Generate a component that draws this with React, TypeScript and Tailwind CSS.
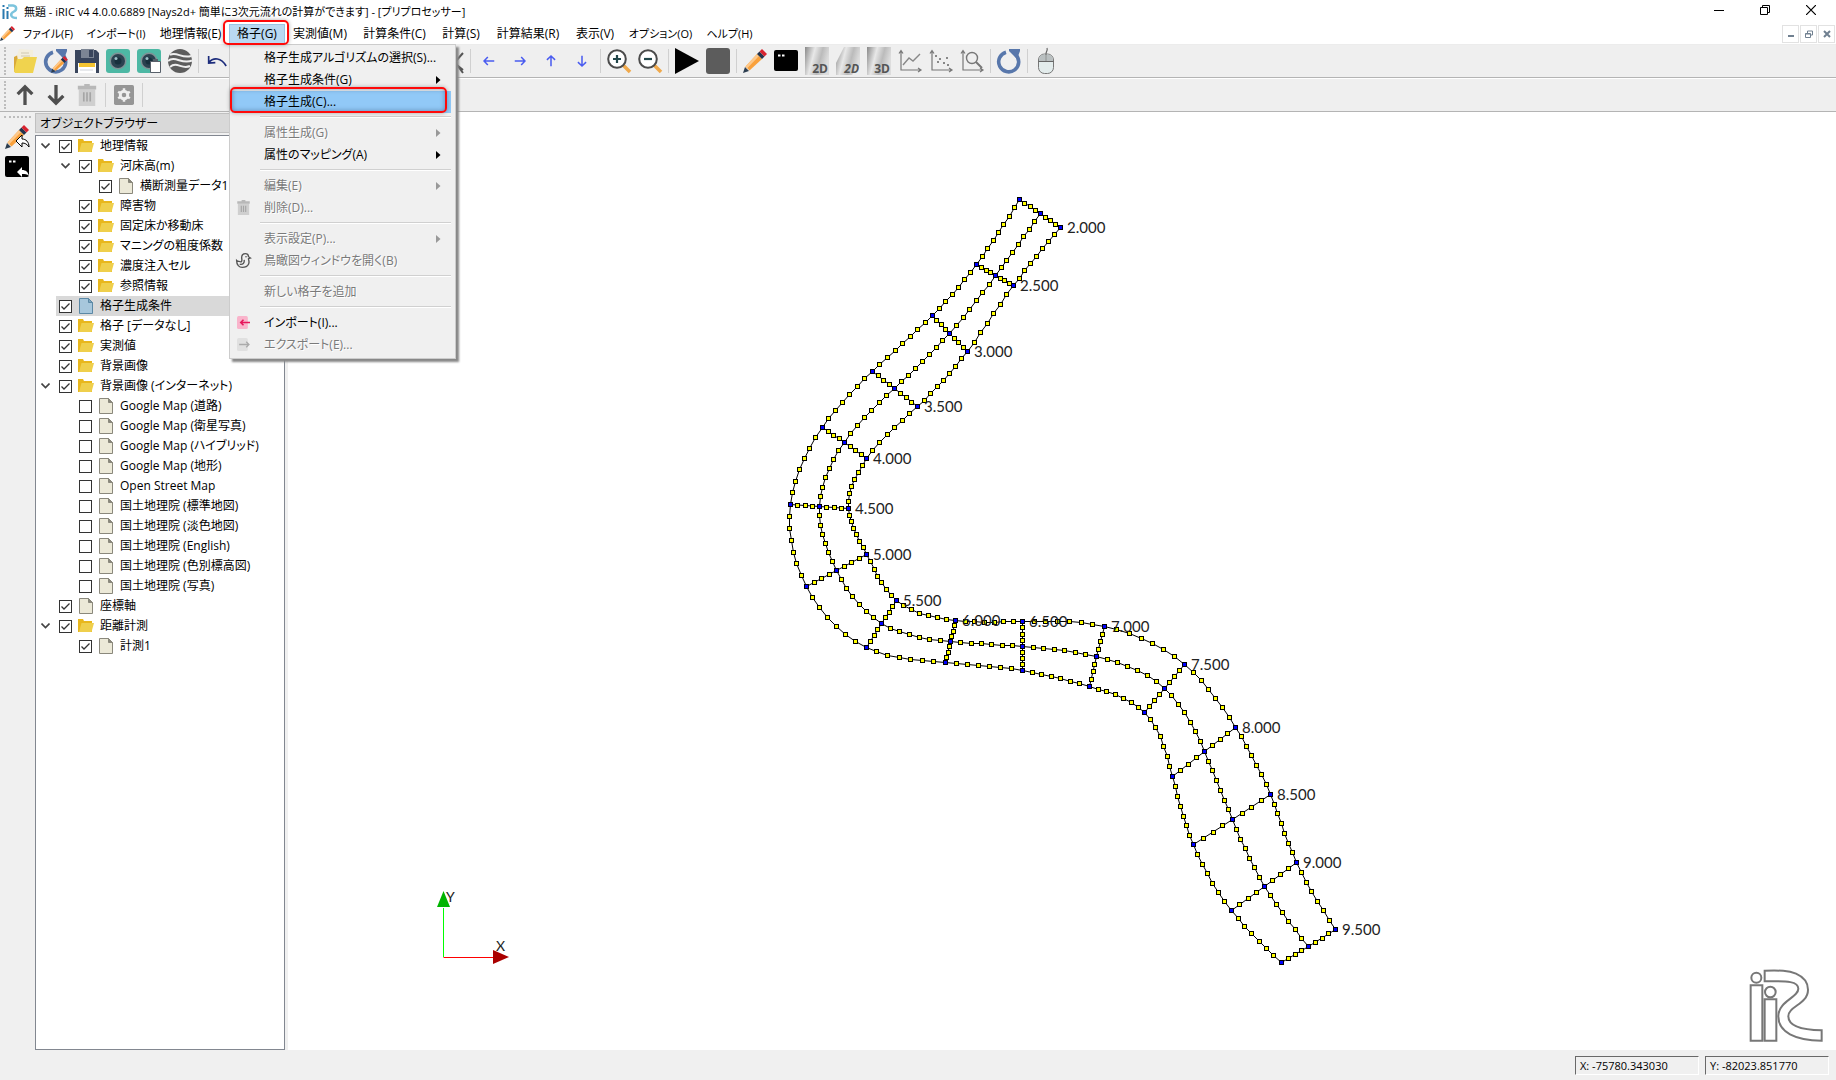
import React, { useState } from "react";

type Point = [number, number];

/* ---------- cross sections of the river: left bank, centre, right bank ---------- */

const SECTIONS: { name: string; pts: [Point, Point, Point] }[] = [
  { name: "2.000", pts: [[1019, 199], [1040, 213], [1060, 227]] },
  { name: "2.500", pts: [[976, 264], [995, 275], [1013, 285]] },
  { name: "3.000", pts: [[932, 315], [949, 333], [967, 351]] },
  { name: "3.500", pts: [[872, 371], [894, 388], [917, 406]] },
  { name: "4.000", pts: [[822, 427], [844, 442], [866, 458]] },
  { name: "4.500", pts: [[790, 504], [819, 506], [848, 508]] },
  { name: "5.000", pts: [[806, 586], [836, 570], [866, 554]] },
  { name: "5.500", pts: [[866, 647], [881, 623], [896, 600]] },
  { name: "6.000", pts: [[945, 662], [950, 641], [955, 620]] },
  { name: "6.500", pts: [[1022, 670], [1022, 646], [1022, 621]] },
  { name: "7.000", pts: [[1089, 686], [1096, 656], [1104, 626]] },
  { name: "7.500", pts: [[1144, 712], [1164, 688], [1184, 664]] },
  { name: "8.000", pts: [[1172, 776], [1204, 751], [1235, 727]] },
  { name: "8.500", pts: [[1193, 844], [1232, 819], [1270, 794]] },
  { name: "9.000", pts: [[1231, 910], [1264, 886], [1296, 862]] },
  { name: "9.500", pts: [[1281, 962], [1308, 946], [1335, 929]] },
];

const DIVISIONS = SECTIONS.slice(1).map((_, i) => (i === 0 || i === 2 ? 8 : 7));

/* Second derivatives of a natural cubic spline through (t, v). */
function secondDerivatives(t: number[], v: number[]): number[] {
  const n = t.length;
  const m = new Array(n).fill(0);
  const u = new Array(n).fill(0);
  for (let i = 1; i < n - 1; i++) {
    const sig = (t[i] - t[i - 1]) / (t[i + 1] - t[i - 1]);
    const p = sig * m[i - 1] + 2;
    m[i] = (sig - 1) / p;
    const d = (v[i + 1] - v[i]) / (t[i + 1] - t[i]) - (v[i] - v[i - 1]) / (t[i] - t[i - 1]);
    u[i] = ((6 * d) / (t[i + 1] - t[i - 1]) - sig * u[i - 1]) / p;
  }
  m[n - 1] = 0;
  for (let i = n - 2; i >= 0; i--) m[i] = m[i] * m[i + 1] + u[i];
  return m;
}

function splinePoints(pts: Point[]): Point[] {
  const t = [0];
  for (let i = 1; i < pts.length; i++) {
    t.push(t[i - 1] + Math.hypot(pts[i][0] - pts[i - 1][0], pts[i][1] - pts[i - 1][1]));
  }
  const axes = [0, 1].map((k) => {
    const v = pts.map((p) => p[k]);
    return { v, m: secondDerivatives(t, v) };
  });
  const out: Point[] = [];
  for (let i = 0; i < pts.length - 1; i++) {
    const h = t[i + 1] - t[i];
    for (let j = 1; j < DIVISIONS[i]; j++) {
      const b = j / DIVISIONS[i];
      const a = 1 - b;
      const [x, y] = axes.map(
        ({ v, m }) => a * v[i] + b * v[i + 1] + (((a * a * a - a) * m[i] + (b * b * b - b) * m[i + 1]) * h * h) / 6,
      );
      out.push([Math.round(x), Math.round(y)]);
    }
    if (i < pts.length - 2) out.push(pts[i + 1]);
  }
  return [pts[0], ...out, pts[pts.length - 1]];
}

const LINES = [0, 1, 2].map((k) => splinePoints(SECTIONS.map((s) => s.pts[k])));

const CROSS_POINTS: Point[] = SECTIONS.flatMap(({ pts }) =>
  [0, 1].flatMap((k) =>
    [1, 2, 3].map(
      (j): Point => [
        Math.round(pts[k][0] + ((pts[k + 1][0] - pts[k][0]) * j) / 4),
        Math.round(pts[k][1] + ((pts[k + 1][1] - pts[k][1]) * j) / 4),
      ],
    ),
  ),
);

const toPoints = (pts: Point[]) => pts.map(([x, y]) => `${x + 0.5},${y + 0.5}`).join(" ");

function Marker({ p, fill }: { p: Point; fill: string }) {
  return <rect x={p[0] - 1.5} y={p[1] - 1.5} width={4} height={4} fill={fill} stroke="#000" strokeWidth={1} />;
}

function GridDrawing() {
  return (
    <svg className="absolute inset-0 h-full w-full" aria-label="格子生成条件">
      <g transform="translate(-288 -112)">
        <g fill="none" stroke="#000" strokeWidth={1}>
          {LINES.map((l, i) => (
            <polyline key={i} points={toPoints(l)} />
          ))}
          {SECTIONS.map((s) => (
            <polyline key={s.name} points={toPoints(s.pts)} />
          ))}
        </g>
        {LINES.flat().map((p, i) => (
          <Marker key={i} p={p} fill="#ffff00" />
        ))}
        {CROSS_POINTS.map((p, i) => (
          <Marker key={i} p={p} fill="#ffff00" />
        ))}
        {SECTIONS.flatMap((s) => s.pts).map((p, i) => (
          <Marker key={i} p={p} fill="#0000ff" />
        ))}
        <g className="font-['Lato'] text-[15px]" fill="#222">
          {SECTIONS.map((s) => (
            <text key={s.name} x={s.pts[2][0] + 7} y={s.pts[2][1] + 6}>
              {s.name}
            </text>
          ))}
        </g>
      </g>
    </svg>
  );
}

function AxisDrawing() {
  return (
    <svg className="absolute bottom-[80px] left-[145px]" width="80" height="88" viewBox="433 881 80 88">
      <path d="M443.500 907V956" stroke="#00ff00" />
      <path d="M443.500 956.500H494" stroke="#ff0000" />
      <path d="M443.500 890L450 906H437Z" fill="#00b400" />
      <path d="M509 956L493 949V963Z" fill="#aa0000" />
      <g className="font-['Lato'] text-[14px]" fill="#222">
        <text x="446" y="901">Y</text>
        <text x="496" y="950">X</text>
      </g>
    </svg>
  );
}

function IricLogo() {
  return (
    <svg className="absolute right-3 bottom-[7px]" width="76" height="76" viewBox="624 78 228 228" fill="none" stroke="#777" strokeWidth="6">
      <path d="M632 133H667V299H632ZM674 175H709V299H674Z" />
      <circle cx="649" cy="110" r="15" />
      <circle cx="691" cy="153" r="16" />
      <path d="M674 89C720 88 745 88 768 98C793 109 804 124 804 146C804 190 745 195 745 226C745 252 780 267 845 268V299C765 298 715 274 715 226C715 180 775 170 775 143C775 122 745 119 674 121Z" />
    </svg>
  );
}

/* ---------- icons ---------- */

function Icon({ size = 24, children }: { size?: number; children: React.ReactNode }) {
  return (
    <svg className="overflow-visible" width={size} height={size} viewBox="0 0 24 24" fill="none">
      {children}
    </svg>
  );
}

const FolderDocs = () => (
  <Icon>
    <path d="M1 8L5 6V21L1 23Z" fill="#d9a93a" />
    <path d="M4 6L6 0L20 1V12H5Z" fill="#f3eedd" />
    <path d="M8 4H16M8 7H17" stroke="#cfc8b0" />
    <path d="M1 22L4 10H9L11 8H24L20 24H2Z" fill="#f0d34e" />
  </Icon>
);

const Pencil = () => (
  <>
    <path d="M0 24L2 18L6 22Z" fill="#2d3e50" />
    <path d="M2.500 17.500L14 5L19 10L6.500 21.500Z" fill="#f9a13c" />
    <path d="M2.500 17.500L14 5L16 7L4 19.500Z" fill="#fdc88a" />
    <path d="M14 5L16.500 2.500L21.500 7.500L19 10Z" fill="#24344d" />
    <path d="M16.500 2.500L19 0L24 5L21.500 7.500Z" fill="#d8232f" />
  </>
);

const Reload = ({ color = "#5877ab" }: { color?: string }) => (
  <>
    <path d="M9 3.200A10 10 0 1 0 18.500 5.500" stroke={color} strokeWidth="3.600" />
    <path d="M12 0H23V2L20 10L12 2Z" fill={color} />
  </>
);

const ReloadPencil = () => (
  <Icon>
    <Reload />
    <g transform="translate(7 7) scale(.7)">
      <Pencil />
    </g>
  </Icon>
);

const Floppy = () => (
  <Icon>
    <path d="M0 1H21L24 4V24H0Z" fill="#39455c" />
    <path d="M6 0H19V9H6Z" fill="#7c8594" />
    <path d="M14 1H18V8H14Z" fill="#39455c" />
    <path d="M3 14H21V24H3Z" fill="#fff" />
    <path d="M4 14H20V18H4Z" fill="#f5c430" />
    <path d="M5 21H18" stroke="#d0d4da" />
  </Icon>
);

const Snapshot = ({ clip = false }: { clip?: boolean }) => (
  <Icon>
    <rect width="24" height="24" rx="3" fill="#4db8a4" />
    <circle cx="12" cy="12" r="8.500" fill="#7f9296" />
    <circle cx="12" cy="12" r="7" fill="#2b4250" />
    <circle cx="12" cy="12" r="3.500" fill="#18303d" />
    <circle cx="10" cy="9.500" r="1.500" fill="#9fc0c8" />
    {clip && (
      <>
        <path d="M13.500 12.500H23.500V23.500H13.500Z" fill="#fff" stroke="#58606a" />
        <path d="M16 10H21V13H16Z" fill="#58606a" />
      </>
    )}
  </Icon>
);

const Swirl = () => (
  <Icon>
    <circle cx="12" cy="12" r="12" fill="#5d5d5d" />
    <path d="M2 6C8 2 14 10 23 7M0 12C7 6 14 16 24 11.500M2 18C9 12 14 21 22 17" stroke="#efefef" strokeWidth="2" />
  </Icon>
);

const Undo = () => (
  <Icon size={20}>
    <path d="M2 14C8 7 17 8 23 18M2 6V14.500L10 14" stroke="#1c2c7c" strokeWidth="2" />
  </Icon>
);

const Cross = () => (
  <Icon>
    <path d="M1 3L23 21M23 4L15 13L23 24" stroke="#555" strokeWidth="2" />
  </Icon>
);

const Arrow = ({ turn }: { turn: number }) => (
  <Icon size={14}>
    <path transform={`rotate(${turn} 12 12)`} d="M4 12H21M10 5L3.500 12L10 19" stroke="#4a5cf0" strokeWidth="2.600" />
  </Icon>
);

const Magnifier = ({ plus = false }: { plus?: boolean }) => (
  <Icon>
    <path d="M16 16L23 23" stroke="#f0a94c" strokeWidth="3.600" />
    <circle cx="10" cy="10" r="8.800" fill="#fff" stroke="#4b4b4b" strokeWidth="2" />
    <path d={plus ? "M6 10H14M10 6V14" : "M6 10H14"} stroke="#23474b" strokeWidth="2.200" />
  </Icon>
);

const Play = () => (
  <Icon>
    <path d="M0 -1L24 12L0 25Z" fill="#000" />
  </Icon>
);
const Stop = () => (
  <Icon>
    <rect y="-1" width="24" height="26" rx="3" fill="#5c5c5c" />
  </Icon>
);
const Console = () => (
  <>
    <rect y="1" width="24" height="21" rx="2" fill="#000" />
    <path d="M4 6.500H6.500M8 6.500H10.500" stroke="#fff" strokeWidth="2" />
  </>
);

const Shade = ({ text, cut = false }: { text: string; cut?: boolean }) => (
  <Icon>
    <defs>
      <linearGradient id="shade" x1="0" y1="0" x2="1" y2="0.300">
        <stop offset="0" stopColor="#888" />
        <stop offset="0.400" stopColor="#e8e8e8" />
        <stop offset="0.700" stopColor="#bbb" />
        <stop offset="1" stopColor="#ddd" />
      </linearGradient>
    </defs>
    <path d={cut ? "M8 -2H24V16L16 26H0V14Z" : "M0 -2H24V26H0Z"} fill="url(#shade)" />
    <text x="23" y="24" textAnchor="end" fill="#555" className={cut ? "font-['Open_Sans'] text-[12px] font-bold italic" : "font-['Open_Sans'] text-[12px] font-bold"}>
      {text}
    </text>
  </Icon>
);

const Chart = ({ kind }: { kind: "line" | "dots" | "lens" }) => (
  <Icon>
    <path d="M3 2V21H22M1 4.500L3 1.500L5 4.500M20 19L23 21L20 23" stroke="#777" strokeWidth="1.200" />
    {kind === "line" && <path d="M5 16L11 9L15 12L22 5" stroke="#888" strokeWidth="1.400" />}
    {kind === "dots" && (
      <path d="M6 7H8M10 10H12M8 13H10M14 14H16M17 9H19M18 16H20" stroke="#888" strokeWidth="2" />
    )}
    {kind === "lens" && (
      <>
        <circle cx="12" cy="9" r="5.500" stroke="#777" strokeWidth="1.400" />
        <path d="M16 13L22 19" stroke="#777" strokeWidth="2" />
      </>
    )}
  </Icon>
);

const Mouse = () => (
  <Icon>
    <path d="M12 5C12 2 14 2 13 -1" stroke="#666" strokeWidth="1.200" />
    <rect x="4.500" y="5" width="15" height="19.500" rx="6" fill="#e3ecec" stroke="#777" />
    <path d="M5 12C5 8 7 5.500 11 5.500V12H5ZM13 5.500C17 5.500 19 8 19 12H13Z" fill="#b9bfc0" />
    <path d="M4.500 12.500H19.500M12 5V12" stroke="#666" />
  </Icon>
);

const BoldArrow = ({ down = false }: { down?: boolean }) => (
  <Icon size={22}>
    <path transform={down ? "rotate(180 12 12)" : undefined} d="M12 23V3M4 11L12 3L20 11" stroke="#4f4f4f" strokeWidth="3.600" />
  </Icon>
);

const TrashShape = () => (
  <>
    <path d="M3 6H21V24H3Z" fill="#cfcfcf" />
    <path d="M2 2H22V6H2ZM9 0H15V2H9Z" fill="#b8b8b8" />
    <path d="M8.500 9V19M12 9V19M15.500 9V19" stroke="#a5a5a5" strokeWidth="1.800" />
  </>
);

const Gear = () => (
  <Icon size={20}>
    <rect width="24" height="24" rx="2" fill="#969696" />
    <circle cx="12" cy="12" r="4.500" stroke="#efefef" strokeWidth="3.500" />
    <path d="M12 4V7M12 17V20M5 8L8 10M16 14L19 16M5 16L8 14M16 10L19 8" stroke="#efefef" strokeWidth="3" />
  </Icon>
);

const BackArrow = () => (
  <path d="M11 16L17 10V14C21 14 24 17 24 22C22 19 20 18 17 18V22Z" fill="#fff" stroke="#000" strokeWidth="1" />
);

const Bird = () => (
  <Icon size={15}>
    <path d="M1 12C3 14 5 13 7 14C9 15 10 12 9 8C9 3 11 1 15 1C19 1 20 4 20 6L23 8L20 9C20 12 22 14 20 18C18 22 14 23 10 23C5 23 1 19 1 12ZM6 18C11 19 14 16 13 11" stroke="#555" strokeWidth="2.200" />
    <circle cx="16" cy="6" r="1.300" fill="#555" />
  </Icon>
);

const FolderIcon = () => (
  <svg width="16" height="14" viewBox="0 0 16 14">
    <path d="M0 0H5L6 2H14V13H0Z" fill="#e8b71d" />
    <path d="M1 13L3.500 4H16L13.500 13Z" fill="#efcf4c" />
  </svg>
);

const FileIcon = ({ blue = false }: { blue?: boolean }) => (
  <svg width="16" height="16" viewBox="0 0 16 16">
    <path d="M1.500 .5H10.500L14.500 4.500V15.500H1.500Z" fill={blue ? "#a7c7dc" : "#ece9d8"} stroke={blue ? "#5b88a5" : "#8a887c"} />
    <path d="M10.500 .5V4.500H14.500Z" fill={blue ? "#7ea5be" : "#8a887c"} stroke={blue ? "#5b88a5" : "#8a887c"} />
  </svg>
);

/* ---------- title, menus ---------- */

const MDI_BUTTON = "grid h-[18px] w-[17px] place-items-center border border-[#e2e2e2] bg-white text-[#708090]";

function TitleBar() {
  return (
    <header className="flex h-[23px] items-start bg-white">
      <svg className="mt-1 ml-[2px] shrink-0" width="16" height="16" viewBox="0 0 16 16" fill="none">
        <path d="M1.500 5V15M5.500 7V15M1.500 1V3M5.500 3V5" stroke="#2a7ab0" strokeWidth="2" />
        <path d="M6 1.500H11C15 2 15 6 12 7.500C7 10 9 14 15 14" stroke="#7cc4dd" strokeWidth="2.500" />
      </svg>
      <h1 className="ml-[6px] grow truncate pt-[4px] text-[11px]">無題 - iRIC v4 4.0.0.6889 [Nays2d+ 簡単に3次元流れの計算ができます] - [プリプロセッサー]</h1>
      <div className="mr-[2px] flex">
        <button aria-label="最小化" className="grid h-5 w-[46px] place-items-center">
          <svg width="10" height="10" viewBox="0 0 10 10"><path d="M0 5.500H10" stroke="#000" /></svg>
        </button>
        <button aria-label="元に戻す" className="grid h-5 w-[46px] place-items-center">
          <svg width="10" height="10" viewBox="0 0 10 10" fill="none"><path d="M.5 2.500H7.500V9.500H.5ZM2.500 2.500V.5H9.500V7.500H7.500" stroke="#000" /></svg>
        </button>
        <button aria-label="閉じる" className="grid h-5 w-[46px] place-items-center">
          <svg width="10" height="10" viewBox="0 0 10 10"><path d="M0 0L10 10M10 0L0 10" stroke="#000" strokeWidth="1.200" /></svg>
        </button>
      </div>
    </header>
  );
}

type MenuEntry = { label: string; sub?: boolean; off?: boolean; active?: boolean; icon?: React.ReactNode } | null;

const GRID_MENU: MenuEntry[] = [
  { label: "格子生成アルゴリズムの選択(S)..." },
  { label: "格子生成条件(G)", sub: true },
  { label: "格子生成(C)...", active: true },
  null,
  { label: "属性生成(G)", sub: true, off: true },
  { label: "属性のマッピング(A)", sub: true },
  null,
  { label: "編集(E)", sub: true, off: true },
  { label: "削除(D)...", off: true, icon: <Icon size={15}><TrashShape /></Icon> },
  null,
  { label: "表示設定(P)...", sub: true, off: true },
  { label: "鳥瞰図ウィンドウを開く(B)", off: true, icon: <Bird /> },
  null,
  { label: "新しい格子を追加", off: true },
  null,
  {
    label: "インポート(I)...",
    icon: (
      <Icon size={13}>
        <rect width="20" height="24" rx="3" fill="#f9b4cb" />
        <path d="M24 12H8M12 7L7 12L12 17" stroke="#e5175c" strokeWidth="3" />
      </Icon>
    ),
  },
  {
    label: "エクスポート(E)...",
    off: true,
    icon: (
      <Icon size={13}>
        <rect width="20" height="24" rx="3" fill="#e0e0e0" />
        <path d="M4 12H21M17 7L22 12L17 17" stroke="#aaa" strokeWidth="2.500" />
      </Icon>
    ),
  },
];

function GridMenu() {
  return (
    <ul role="menu" className="absolute top-[20px] left-0 z-20 w-[227px] border border-[#ccc] bg-[#f0f0f0] py-[2px] pr-[4px] pl-[2px] shadow-[3px_3px_2px_#888]">
      {GRID_MENU.map((m, i) =>
        m === null ? (
          <li key={i} role="separator" className="ml-[28px] flex h-[9px] items-center">
            <span className="h-[2px] w-full border-t border-b border-t-[#d0d0d0] border-b-white" />
          </li>
        ) : (
          <li key={i} role="none" className="relative">
            <button
              role="menuitem"
              disabled={m.off}
              className={
                "flex h-[22px] w-full items-center text-left whitespace-nowrap disabled:text-[#7a7a7a] disabled:[text-shadow:1px_1px_0_#fff] " +
                (m.active ? "bg-[#91c9f7]" : "")
              }
            >
              <span className="grid w-[32px] place-items-center pr-[10px]">{m.icon}</span>
              <span className="grow">{m.label}</span>
              {m.sub && (
                <svg className="mr-[10px]" width="5" height="8" viewBox="0 0 5 8">
                  <path d="M0 0L4.500 4L0 8Z" fill={m.off ? "#999" : "#000"} />
                </svg>
              )}
            </button>
            {m.active && (
              <span className="pointer-events-none absolute -top-[4px] -left-[2px] h-[26px] w-[217px] rounded-[5px] border-2 border-[#ff0a0a] shadow-[inset_0_0_5px_rgba(60,90,130,.6),0_0_4px_rgba(0,0,0,.3)]" />
            )}
          </li>
        ),
      )}
    </ul>
  );
}

/* Labels made of katakana are set one step smaller than those made of kanji. */
const MENUS: { label: string; className: string }[] = [
  { label: "ファイル(F)", className: "w-16 text-[11px]" },
  { label: "インポート(I)", className: "w-[72px] text-[11px]" },
  { label: "地理情報(E)", className: "w-[77px] text-[12px]" },
  { label: "格子(G)", className: "" },
  { label: "実測値(M)", className: "w-[70px] text-[12px]" },
  { label: "計算条件(C)", className: "w-[79px] text-[12px]" },
  { label: "計算(S)", className: "w-[54px] text-[12px]" },
  { label: "計算結果(R)", className: "w-20 text-[12px]" },
  { label: "表示(V)", className: "w-[54px] text-[12px]" },
  { label: "オプション(O)", className: "w-[77px] text-[11px]" },
  { label: "ヘルプ(H)", className: "w-[61px] text-[11px]" },
];

function MenuBar() {
  return (
    <nav className="flex h-[21px] items-center bg-white">
      <span className="w-4">
        <Icon size={15}><Pencil /></Icon>
      </span>
      {MENUS.map(({ label, className }) =>
        label === "格子(G)" ? (
          <div key={label} className="relative z-20">
            <button aria-expanded="true" className="h-[20px] w-[56px] border border-[#9cc4e4] bg-[#b9d9f2] whitespace-nowrap">{label}</button>
            <span className="pointer-events-none absolute -top-[4px] -right-[4px] -left-[6px] z-30 h-[25px] rounded-[5px] border-2 border-[#ff0a0a] shadow-[0_0_4px_rgba(0,0,0,.3)]" />
            <GridMenu />
          </div>
        ) : (
          <button key={label} className={"h-[20px] whitespace-nowrap " + className}>{label}</button>
        ),
      )}
      <div className="mr-px ml-auto flex gap-px">
        <button aria-label="ウィンドウを最小化" className={MDI_BUTTON}>
          <svg width="8" height="8" viewBox="0 0 8 8"><path d="M1 6H7" stroke="currentColor" strokeWidth="2" /></svg>
        </button>
        <button aria-label="ウィンドウを元に戻す" className={MDI_BUTTON}>
          <svg width="8" height="8" viewBox="0 0 8 8" fill="none"><path d="M.5 3.500H5.500V7.500H.5ZM.5 4H5.500M2.500 3V1H7.500V5H6" stroke="currentColor" /></svg>
        </button>
        <button aria-label="ウィンドウを閉じる" className={MDI_BUTTON}>
          <svg width="8" height="8" viewBox="0 0 8 8"><path d="M1 1L7 7M7 1L1 7" stroke="currentColor" strokeWidth="2" /></svg>
        </button>
      </div>
    </nav>
  );
}

/* ---------- tool bars ---------- */

function Tool({ label, children }: { label: string; children: React.ReactNode }) {
  return (
    <button title={label} aria-label={label} className="grid h-8 w-[31px] shrink-0 place-items-center">
      {children}
    </button>
  );
}

const Sep = () => (
  <span className="flex w-[6px] shrink-0 justify-center">
    <span className="h-6 w-px bg-[#d0d0d0]" />
  </span>
);

const Grip = () => (
  <span className="flex w-[9px] shrink-0 justify-center">
    <span className="h-7 border-l-2 border-dotted border-[#bdbdbd]" />
  </span>
);

function ToolBars() {
  return (
    <>
      <div role="toolbar" className="flex h-[34px] items-center border-t border-b border-t-[#ececec] border-b-[#b4b4b4] bg-[#efefef]">
        <Grip />
        <Tool label="開く"><FolderDocs /></Tool>
        <Tool label="ソルバーで開く"><ReloadPencil /></Tool>
        <Tool label="保存"><Floppy /></Tool>
        <Tool label="スナップショット"><Snapshot /></Tool>
        <Tool label="コピー"><Snapshot clip /></Tool>
        <Tool label="Google Earth"><Swirl /></Tool>
        <Sep />
        <Tool label="元に戻す"><Undo /></Tool>
        <Tool label="やり直し"><span className="-scale-x-100"><Undo /></span></Tool>
        <Sep />
        <Tool label="全体表示"><Magnifier /></Tool>
        <Tool label="XY"><Chart kind="line" /></Tool>
        <Tool label="YZ"><Chart kind="dots" /></Tool>
        <Sep />
        <Tool label="ZX"><Chart kind="lens" /></Tool>
        <Tool label="回転"><Icon><Reload /></Icon></Tool>
        <Sep />
        <Tool label="リセット"><Cross /></Tool>
        <Sep />
        <Tool label="左"><Arrow turn={0} /></Tool>
        <Tool label="右"><Arrow turn={180} /></Tool>
        <Tool label="上"><Arrow turn={90} /></Tool>
        <Tool label="下"><Arrow turn={270} /></Tool>
        <Sep />
        <Tool label="拡大"><Magnifier plus /></Tool>
        <Tool label="縮小"><Magnifier /></Tool>
        <Sep />
        <Tool label="実行"><Play /></Tool>
        <Tool label="停止"><Stop /></Tool>
        <Sep />
        <Tool label="プリプロセッサー"><Icon><Pencil /></Icon></Tool>
        <Tool label="コンソール"><Icon><Console /></Icon></Tool>
        <Tool label="2D"><Shade text="2D" /></Tool>
        <Tool label="鳥瞰図 2D"><Shade text="2D" cut /></Tool>
        <Tool label="3D"><Shade text="3D" /></Tool>
        <Tool label="グラフ"><Chart kind="line" /></Tool>
        <Tool label="散布図"><Chart kind="dots" /></Tool>
        <Tool label="検証"><Chart kind="lens" /></Tool>
        <Sep />
        <Tool label="再読み込み"><Icon><Reload /></Icon></Tool>
        <Sep />
        <Tool label="マウス操作"><Mouse /></Tool>
      </div>
      <div role="toolbar" className="flex h-[34px] items-center border-t border-b border-t-white border-b-[#b4b4b4] bg-[#efefef]">
        <Grip />
        <Tool label="上へ"><BoldArrow /></Tool>
        <Tool label="下へ"><BoldArrow down /></Tool>
        <Tool label="削除"><Icon size={22}><TrashShape /></Icon></Tool>
        <Sep />
        <Tool label="設定"><Gear /></Tool>
        <Sep />
      </div>
    </>
  );
}

/* ---------- object browser ---------- */

type Row = { label: string; depth: number; on?: boolean; file?: boolean; blue?: boolean; open?: boolean };

const ROWS: Row[] = [
  { label: "地理情報", depth: 0, on: true, open: true },
  { label: "河床高(m)", depth: 1, on: true, open: true },
  { label: "横断測量データ1", depth: 2, on: true, file: true },
  { label: "障害物", depth: 1, on: true },
  { label: "固定床か移動床", depth: 1, on: true },
  { label: "マニングの粗度係数", depth: 1, on: true },
  { label: "濃度注入セル", depth: 1, on: true },
  { label: "参照情報", depth: 1, on: true },
  { label: "格子生成条件", depth: 0, on: true, file: true, blue: true },
  { label: "格子 [データなし]", depth: 0, on: true },
  { label: "実測値", depth: 0, on: true },
  { label: "背景画像", depth: 0, on: true },
  { label: "背景画像 (インターネット)", depth: 0, on: true, open: true },
  { label: "Google Map (道路)", depth: 1, file: true },
  { label: "Google Map (衛星写真)", depth: 1, file: true },
  { label: "Google Map (ハイブリッド)", depth: 1, file: true },
  { label: "Google Map (地形)", depth: 1, file: true },
  { label: "Open Street Map", depth: 1, file: true },
  { label: "国土地理院 (標準地図)", depth: 1, file: true },
  { label: "国土地理院 (淡色地図)", depth: 1, file: true },
  { label: "国土地理院 (English)", depth: 1, file: true },
  { label: "国土地理院 (色別標高図)", depth: 1, file: true },
  { label: "国土地理院 (写真)", depth: 1, file: true },
  { label: "座標軸", depth: 0, on: true, file: true },
  { label: "距離計測", depth: 0, on: true, open: true },
  { label: "計測1", depth: 1, on: true, file: true },
];

const INDENT = ["pl-0", "pl-5", "pl-10"];

function TreeRow({ row }: { row: Row }) {
  const [on, setOn] = useState(!!row.on);
  return (
    <li className={"flex h-5 items-center " + INDENT[row.depth]}>
      <span className="grid w-5 shrink-0 place-items-center pr-px">
        {row.open && (
          <button aria-label="折りたたむ" className="grid place-items-center">
            <svg width="9" height="6" viewBox="0 0 9 6" fill="none"><path d="M.5 .5L4.500 4.500L8.500 .5" stroke="#444" strokeWidth="1.600" /></svg>
          </button>
        )}
      </span>
      <label className={"flex h-full grow items-center gap-[6px] pl-[3px] whitespace-nowrap " + (row.blue ? "bg-[#d9d9d9]" : "")}>
        <span className="relative h-[13px] w-[13px] shrink-0">
          <input type="checkbox" checked={on} onChange={() => setOn(!on)} className="block h-[13px] w-[13px] appearance-none border border-[#333] bg-white" />
          {on && (
            <svg className="pointer-events-none absolute top-0 left-0" width="13" height="13" viewBox="0 0 13 13" fill="none">
              <path d="M2.500 6.500L5 9L10.500 3.500" stroke="#333" strokeWidth="1.300" />
            </svg>
          )}
        </span>
        {row.file ? <FileIcon blue={row.blue} /> : <FolderIcon />}
        <span>{row.label}</span>
      </label>
    </li>
  );
}

function SideBar() {
  return (
    <div className="flex w-[35px] shrink-0 flex-col items-center pt-1 pr-px">
      <span className="w-[27px] border-t-2 border-dotted border-[#bdbdbd]" />
      <button aria-label="プリプロセッサーへ戻る" className="mt-[7px]">
        <Icon>
          <Pencil />
          <BackArrow />
        </Icon>
      </button>
      <button aria-label="コンソールへ戻る" className="mt-[6px]">
        <Icon>
          <Console />
          <path d="M12 17L17 12V15C21 15 23 17 24 21C22 19 20 19 17 19V22Z" fill="#fff" />
        </Icon>
      </button>
    </div>
  );
}

export default function App() {
  return (
    <div className="flex h-screen flex-col overflow-hidden bg-[#f0f0f0] font-['Open_Sans','Noto_Sans_CJK_JP',sans-serif] text-[12px] leading-4 text-black [font-feature-settings:'palt']">
      <TitleBar />
      <MenuBar />
      <ToolBars />
      <main className="flex min-h-0 grow">
        <SideBar />
        <aside className="mr-[3px] flex w-[250px] shrink-0 flex-col pt-px">
          <h2 className="flex h-5 items-center border border-[#c0c0c0] bg-[#d9d9d9] pt-px pl-1">オブジェクトブラウザー</h2>
          <ul className="mt-[2px] grow border border-[#828790] bg-white">
            {ROWS.map((r) => (
              <TreeRow key={r.label} row={r} />
            ))}
          </ul>
        </aside>
        <section className="relative grow overflow-hidden bg-white">
          <GridDrawing />
          <AxisDrawing />
          <IricLogo />
        </section>
      </main>
      <footer className="flex h-[30px] items-center justify-end gap-[6px] pr-[7px] text-[11px]">
        <output className="h-[19px] w-[124px] border border-t-[#696969] border-r-white border-b-white border-l-[#696969] pt-px pl-1">X: -75780.343030</output>
        <output className="h-[19px] w-[124px] border border-t-[#696969] border-r-white border-b-white border-l-[#696969] pt-px pl-1">Y: -82023.851770</output>
      </footer>
    </div>
  );
}
